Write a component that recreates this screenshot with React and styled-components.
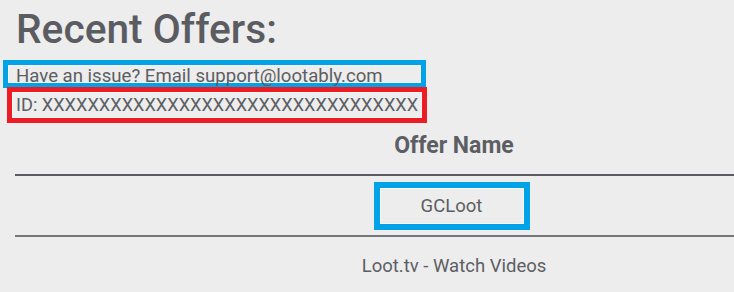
import React from 'react'
import styled, { createGlobalStyle } from 'styled-components'

const GlobalStyle = createGlobalStyle`
  html, body {
    margin: 0;
    padding: 0;
    background: #ededed;
    overflow: hidden;
  }
  body {
    font-family: Roboto, 'Liberation Sans', Arial, sans-serif;
    color: #5c5e63;
  }
`

const COLOR = {
  TEXT: '#5c5e63',
  BLUE: '#00a2e8',
  RED: '#ed1c24',
  LINE_DARK: '#5b5d62',
  LINE: '#74767a',
}

const Page = styled.div`
  width: 734px;
  height: 292px;
  overflow: hidden;
  padding-left: 16px;
  box-sizing: border-box;
`

const Title = styled.h1`
  margin: 0;
  padding-top: 6px;
  height: 54px;
  font-size: 40.7px;
  line-height: 46px;
  font-weight: 500;
  color: #5a5c61;
`

// annotation frames around the lines of text
const Marked = styled.div`
  box-sizing: border-box;
  border: ${({ thick }) => thick || 5}px solid ${({ color }) => color};
  box-shadow: inset 0 0 0 1px #f7f7f7;
  white-space: nowrap;
  position: relative;
`

const IssueLine = styled(Marked)`
  width: 423px;
  height: 28px;
  margin-left: -13px;
  padding-left: 8px;
  font-size: 18.6px;
  line-height: 23px;
  z-index: 1;
`

const IdLine = styled(Marked)`
  width: 420px;
  height: 36px;
  margin-left: -9px;
  margin-top: -1px;
  padding-left: 4px;
  font-size: 18.2px;
  line-height: 26px;
  z-index: 2;
`

const Table = styled.div`
  width: 878px;
  margin-left: -1px;
`

const HeadRow = styled.div`
  box-sizing: border-box;
  height: 53px;
  padding-bottom: 7px;
  display: flex;
  align-items: center;
  justify-content: center;
  border-bottom: 2px solid ${COLOR.LINE_DARK};
  font-size: 23px;
  font-weight: 700;
`

const Row = styled.div`
  box-sizing: border-box;
  height: ${({ h }) => h}px;
  display: flex;
  align-items: center;
  justify-content: center;
  border-bottom: ${({ last }) => (last ? 'none' : `2px solid ${COLOR.LINE}`)};
  font-size: 18.5px;
`

const OfferBox = styled(Marked)`
  width: 156px;
  height: 48px;
  display: flex;
  align-items: center;
  justify-content: center;
  margin-left: -5px;
`

const offers = [
  { name: 'GCLoot', marked: true },
  { name: 'Loot.tv - Watch Videos' },
]

export default function App() {
  return (
    <>
      <GlobalStyle />
      <Page>
        <Title>Recent Offers:</Title>
        <IssueLine color={COLOR.BLUE}>
          Have an issue? Email support@lootably.com
        </IssueLine>
        <IdLine color={COLOR.RED}>ID: {'X'.repeat(33)}</IdLine>
        <Table>
          <HeadRow>Offer Name</HeadRow>
          {offers.map((o, i) => (
            <Row key={o.name} h={i === 0 ? 61 : 58} last={i === offers.length - 1}>
              {o.marked ? (
                <OfferBox color={COLOR.BLUE} thick={6}>
                  {o.name}
                </OfferBox>
              ) : (
                o.name
              )}
            </Row>
          ))}
        </Table>
      </Page>
    </>
  )
}
